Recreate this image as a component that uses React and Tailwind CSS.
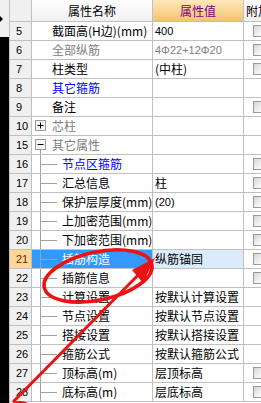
import React from "react";

// 属性表行数据
const ROWS = [
  { n: 5, name: "截面高(H边)(mm)", val: "400", cb: true },
  { n: 6, name: "全部纵筋", val: "4Φ22+12Φ20", gray: true, valGray: true, cb: true },
  { n: 7, name: "柱类型", val: "(中柱)", cb: true },
  { n: 8, name: "其它箍筋", blue: true },
  { n: 9, name: "备注", cb: true },
  { n: 10, name: "芯柱", gray: true, box: "+" },
  { n: 15, name: "其它属性", gray: true, box: "-" },
  { n: 16, name: "节点区箍筋", blue: true, child: true, cb: true },
  { n: 17, name: "汇总信息", val: "柱", child: true, cb: true },
  { n: 18, name: "保护层厚度(mm)", val: "(20)", child: true, cb: true },
  { n: 19, name: "上加密范围(mm)", child: true, cb: true },
  { n: 20, name: "下加密范围(mm)", child: true, cb: true },
  { n: 21, name: "插筋构造", val: "纵筋锚固", child: true, cb: true, sel: true },
  { n: 22, name: "插筋信息", child: true, cb: true },
  { n: 23, name: "计算设置", val: "按默认计算设置", child: true },
  { n: 24, name: "节点设置", val: "按默认节点设置", child: true },
  { n: 25, name: "搭接设置", val: "按默认搭接设置", child: true },
  { n: 26, name: "箍筋公式", val: "按默认箍筋公式", child: true },
  { n: 27, name: "顶标高(m)", val: "层顶标高", child: true, cb: true },
  { n: 28, name: "底标高(m)", val: "层底标高", child: true, cb: true },
];

const CJK = "font-['SimSun','Noto_Sans_CJK_SC',sans-serif]";

function TreeBox({ sign, line }) {
  return (
    <svg width="20" height="18" className="shrink-0">
      {line && <line x1="8.5" y1="13" x2="8.5" y2="18" stroke="#a0a0a0" />}
      <rect x="3.5" y="3.5" width="10" height="10" fill="#f4f4f4" stroke="#9a9a9a" />
      <line x1="5.5" y1="8.5" x2="11.5" y2="8.5" stroke="#000" />
      {sign === "+" && <line x1="8.5" y1="5.5" x2="8.5" y2="11.5" stroke="#000" />}
    </svg>
  );
}

function TreeLine() {
  return (
    <svg width="30" height="18" className="shrink-0">
      <line x1="8.5" y1="0" x2="8.5" y2="18" stroke="#a0a0a0" />
      <line x1="9" y1="9.5" x2="25" y2="9.5" stroke="#a0a0a0" />
    </svg>
  );
}

function Check() {
  return <div className="w-[12px] h-[12px] border border-[#9a9a9a] bg-gradient-to-br from-[#d4d4d4] via-[#eeeeee] to-white" />;
}

export default function App() {
  return (
    <div className={`relative w-[261px] h-[403px] overflow-hidden flex bg-white ${CJK} text-[12px]`}>
      {/* 左侧窗口边缘 */}
      <div className="w-[9px] flex flex-col shrink-0">
        <div className="h-[37px] bg-[#f0f0f0] flex items-center">
          <svg width="3" height="6"><polygon points="0,0 3,3 0,6" fill="#000" /></svg>
        </div>
        <div className="flex-1 bg-black" />
      </div>

      <div className="flex-1 flex flex-col border-l border-[#c0c0c0] min-w-0">
        {/* 表头 */}
        <div className="h-[22px] flex border-b border-[#c0c0c0] shrink-0">
          <div className="w-[22px] shrink-0 border-r border-[#c0c0c0] bg-[#f0f0f0]" />
          <div className="w-[121px] shrink-0 border-r border-[#c0c0c0] bg-gradient-to-b from-white to-[#f0f0f0] flex items-center justify-center text-black">属性名称</div>
          <div className="w-[91px] shrink-0 border-r border-[#c0c0c0] bg-gradient-to-b from-[#fde8bd] to-[#f5c36c] flex items-center justify-center text-[#800080]">属性值</div>
          <div className="flex-1 bg-gradient-to-b from-white to-[#f0f0f0] flex items-center pl-[2px] whitespace-nowrap overflow-hidden">附加</div>
        </div>

        {ROWS.map((r) => (
          <div key={r.n} className="h-[19px] flex border-b border-[#c0c0c0] shrink-0">
            <div className={`w-[22px] shrink-0 border-r border-[#c0c0c0] flex items-center pl-[6px] font-['Liberation_Sans',sans-serif] text-[11px] ${r.sel ? "bg-[#fcd894] text-[#6b2400]" : "bg-[#f0f0f0] text-black"}`}>{r.n}</div>
            <div className={`w-[121px] shrink-0 border-r border-[#c0c0c0] flex items-center overflow-hidden whitespace-nowrap ${r.sel ? "bg-[#3399ff] text-white" : r.blue ? "text-[#0000ff]" : r.gray ? "text-[#808080]" : "text-black"}`}>
              {r.box ? <TreeBox sign={r.box} line={r.box === "-"} /> : r.child ? <TreeLine /> : <span className="w-[20px] shrink-0" />}
              <span>{r.name}</span>
            </div>
            <div className={`w-[91px] shrink-0 border-r border-[#c0c0c0] flex items-center pl-[2px] overflow-hidden whitespace-nowrap ${r.sel ? "bg-[#dcebfc]" : ""} ${r.valGray ? "text-[#808080]" : "text-black"}`}>
              {r.val && /^[0-9(]/.test(r.val) && !/[\u4e00-\u9fa5]/.test(r.val) ? (
                <span className="font-['Liberation_Sans',sans-serif] text-[11px]">{r.val}</span>
              ) : (
                <span>{r.val}</span>
              )}
            </div>
            <div className="flex-1 flex items-center pl-[9px]">{r.cb && <Check />}</div>
          </div>
        ))}
      </div>

      {/* 红色标注 */}
      <svg className="absolute inset-0 pointer-events-none" width="261" height="403">
        <ellipse cx="98" cy="276" rx="55" ry="24" transform="rotate(-12 98 276)" fill="none" stroke="#ee1111" strokeWidth="3.5" />
        <line x1="146" y1="267" x2="14" y2="401" stroke="#ee1111" strokeWidth="3" strokeLinecap="round" />
        <polygon points="155,258 132,270 143,283" fill="#ee1111" />
        <ellipse cx="20" cy="405" rx="9" ry="4" fill="#ee1111" />
      </svg>
    </div>
  );
}
